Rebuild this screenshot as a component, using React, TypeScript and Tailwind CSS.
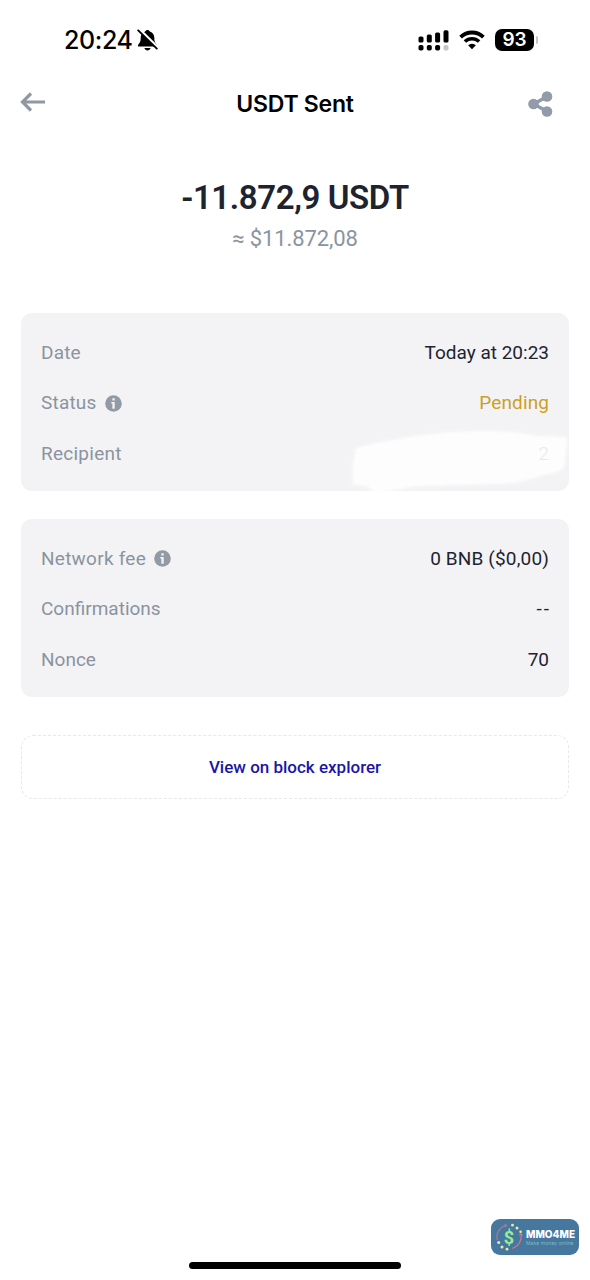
import React from 'react';

const SignalIcon = () => (
  <svg className="w-[31px] h-[21px]" viewBox="0 0 31 21">
    <g fill="#000">
      <rect x="0.500" y="6.500" width="5" height="6" rx="1.600" />
      <rect x="8.800" y="4.500" width="5" height="8" rx="1.600" />
      <rect x="17.100" y="2.500" width="5" height="10" rx="1.600" />
      <rect x="25.500" y="0.300" width="5" height="12.200" rx="1.600" />
      <rect x="0.500" y="15" width="5" height="5.600" rx="1.800" />
      <rect x="8.800" y="15" width="5" height="5.600" rx="1.800" />
      <rect x="17.100" y="15" width="5" height="5.600" rx="1.800" />
    </g>
    <rect x="25.500" y="15" width="5" height="5.600" rx="1.800" fill="#c6c6c6" />
  </svg>
);

const WifiIcon = () => (
  <svg className="w-[26px] h-[20px]" viewBox="0 0 26 20">
    <path d="M1.600 7.200a16.200 16.200 0 0 1 22.800 0" fill="none" stroke="#000" strokeWidth="3.800" />
    <path d="M5.900 11.600a10.100 10.100 0 0 1 14.200 0" fill="none" stroke="#000" strokeWidth="3.500" />
    <path d="M13 19.200l-3.900-3.900a5.600 5.600 0 0 1 7.800 0z" fill="#000" />
  </svg>
);

const BellOffIcon = () => (
  <svg className="w-[21px] h-[22px]" viewBox="0 0 21 22">
    <path d="M10.500 1c-1.100 0-2 .7-2.300 1.600C5 3.600 3.700 6 3.700 8.800c0 4-1 5.300-2.300 6.600-.9 1-.6 2.200.8 2.200h16.600c1.400 0 1.700-1.200.8-2.200-1.300-1.300-2.300-2.600-2.300-6.600 0-2.800-1.300-5.200-4.500-6.200C12.500 1.700 11.600 1 10.500 1z" fill="#000" />
    <path d="M7.400 19.100h6.200c-.5 1.400-1.600 2.300-3.100 2.300s-2.600-.9-3.100-2.300z" fill="#000" />
    <path d="M2.600 .9l18 17.600" stroke="#fff" strokeWidth="3.200" />
    <path d="M1.200 1.400l18.600 18.200" stroke="#000" strokeWidth="1.900" strokeLinecap="round" />
  </svg>
);

const BackIcon = () => (
  <svg className="w-[26px] h-[20px]" viewBox="0 0 26 20" fill="none" stroke="#8f98a3" strokeWidth="3.200">
    <path d="M25 10H2.500M11 1.500L2.500 10l8.500 8.500" />
  </svg>
);

const ShareIcon = () => (
  <svg className="w-[25px] h-[26px]" viewBox="0 0 25 26" fill="#919baa">
    <path d="M19.500 5.500L5.500 13l14 7.500" fill="none" stroke="#919baa" strokeWidth="3.600" />
    <circle cx="19" cy="5.500" r="5.300" />
    <circle cx="5.500" cy="13" r="5.300" />
    <circle cx="19" cy="20.500" r="5.300" />
  </svg>
);

const InfoIcon = () => (
  <svg className="w-[17px] h-[17px]" viewBox="0 0 17 17">
    <circle cx="8.500" cy="8.500" r="8.300" fill="#929aa6" />
    <path d="M7.400 3.200h2.300v2.200H7.400zM6.300 6.900h3.400v6.900H7.400V8.500H6.300z" fill="#f4f4f6" />
  </svg>
);

const CoinLogo = () => (
  <svg className="w-[28px] h-[30px] shrink-0" viewBox="0 0 28 30">
    <path d="M2.200 18C.7 11.500 4.500 5.200 11 3.200M9.500 2.500l2 .7-1.200 1.800" fill="none" stroke="#b8788f" strokeWidth="1.100" />
    <path d="M26 12c1.200 6.500-2.500 12.500-9 14.500M24.200 13.500L26 11.500l1.500 2.200" fill="none" stroke="#d37585" strokeWidth="1.100" />
    <g fill="#eee9a0">
      <circle cx="17.500" cy="3.200" r="1.400" />
      <circle cx="22" cy="6" r="1.500" />
      <circle cx="25.600" cy="9.800" r="1.300" />
      <circle cx="3.700" cy="20.500" r="1.500" />
      <circle cx="7" cy="25" r="1.500" />
      <circle cx="12" cy="27.200" r="1.400" />
    </g>
  </svg>
);

interface RowProps {
  label: string;
  labelClass?: string;
  value: string;
  valueClass?: string;
  info?: boolean;
}

const Row: React.FC<RowProps> = ({ label, labelClass = '', value, valueClass = '', info }) => (
  <div className="flex items-center justify-between h-[50.5px] text-[19px] whitespace-nowrap">
    <div className="flex items-center gap-2">
      <span className={`text-[#8b93a0] ${labelClass}`}>{label}</span>
      {info && <InfoIcon />}
    </div>
    <span className={valueClass}>{value}</span>
  </div>
);

const App: React.FC = () => {
  return (
    <div className="w-[590px] h-[1280px] bg-white flex flex-col overflow-hidden text-[#1e2330] font-['Roboto',sans-serif]">
      {/* Status bar */}
      <div className="h-20 pl-16 pr-[52px] flex items-center justify-between font-['Inter',sans-serif] text-black">
        <div className="flex items-center gap-1">
          <span className="pt-[2px] text-[25px] font-medium tracking-[-0.4px]">20:24</span>
          <BellOffIcon />
        </div>
        <div className="flex items-center">
          <SignalIcon />
          <div className="ml-2.5"><WifiIcon /></div>
          <div className="ml-2.5 w-[39px] h-[22px] rounded-[7px] bg-black text-white text-[19px] font-semibold leading-[22px] text-center">93</div>
          <div className="ml-0.5 w-[2px] h-2 rounded-r bg-[#c4c4c4]"></div>
        </div>
      </div>

      {/* Header */}
      <div className="h-12 pl-5 pr-[37px] flex items-center justify-between text-black">
        <div className="w-[42px] pb-1"><BackIcon /></div>
        <h1 className="pt-px font-['Inter',sans-serif] text-[23px] font-semibold tracking-[-0.25px]">USDT Sent</h1>
        <ShareIcon />
      </div>

      {/* Amount */}
      <div className="pt-[50px] h-[185px] flex flex-col items-center">
        <div className="text-[33px] leading-10 font-semibold tracking-[-0.4px]">-11.872,9 USDT</div>
        <div className="text-[22px] leading-8 mt-[5px] text-[#8b94a1] tracking-[-0.1px]">≈ $11.872,08</div>
      </div>

      {/* Transfer details */}
      <div className="relative mx-[21px] h-[178px] px-5 pt-[14.5px] rounded-[11px] bg-[#f3f3f5]">
        <Row label="Date" labelClass="tracking-[0.2px]" value="Today at 20:23" />
        <Row label="Status" labelClass="tracking-[0.2px]" value="Pending" valueClass="text-[#cda01e] tracking-[0.1px]" info />
        <Row label="Recipient" labelClass="tracking-[0.25px]" value="2" valueClass="relative z-10 font-light text-[#e9e9eb]" />
        <svg className="absolute left-[326px] top-[113px] w-[224px] h-[65px]" viewBox="0 0 224 65">
          <defs>
            <filter id="soften"><feGaussianBlur stdDeviation="1.500" /></filter>
          </defs>
          <path d="M9 22Q60 10 95 7Q155 3 190 10L216 11Q221 11 220 17L217 40Q216 46 199 48Q185 53 166 57Q110 59 70 60L29 67L20 60L6 58Q5 46 8 27Z" fill="#fefeff" filter="url(#soften)" opacity="0.970" />
        </svg>
      </div>

      {/* Network details */}
      <div className="mx-[21px] mt-7 h-[178px] px-5 pt-[14.5px] rounded-[11px] bg-[#f3f3f5]">
        <Row label="Network fee" labelClass="tracking-[0.25px]" value="0 BNB ($0,00)" valueClass="tracking-[0.15px]" info />
        <Row label="Confirmations" labelClass="tracking-[0px]" value="--" valueClass="tracking-[2px] -mr-[2px]" />
        <Row label="Nonce" labelClass="tracking-[0px]" value="70" />
      </div>

      {/* Explorer button */}
      <button className="mx-[21px] mt-[38px] h-[64px] pt-[2px] rounded-[12px] border border-dashed border-[#e8e8ea] text-[17px] font-medium text-[#1b16a8]">
        View on block explorer
      </button>

      {/* Footer */}
      <div className="mt-auto flex flex-col items-end">
        <div className="mr-[11px] w-[88px] h-[36px] pl-1 rounded-[9px] bg-[#46789f] flex items-center gap-[3px]">
          <div className="relative">
            <CoinLogo />
            <span className="absolute inset-0 flex items-center justify-center text-[18px] font-bold text-[#9bea98]">$</span>
          </div>
          <div className="font-['Inter',sans-serif] whitespace-nowrap">
            <div className="text-[10px] leading-[11px] font-extrabold text-white">MMO4ME</div>
            <div className="text-[5px] leading-[6px] text-[#83bac3] tracking-[0.1px]">Make money online</div>
          </div>
        </div>
        <div className="self-center mt-[7px] mb-[11px] w-[212px] h-[7px] rounded-full bg-black"></div>
      </div>
    </div>
  );
};

export default App;
